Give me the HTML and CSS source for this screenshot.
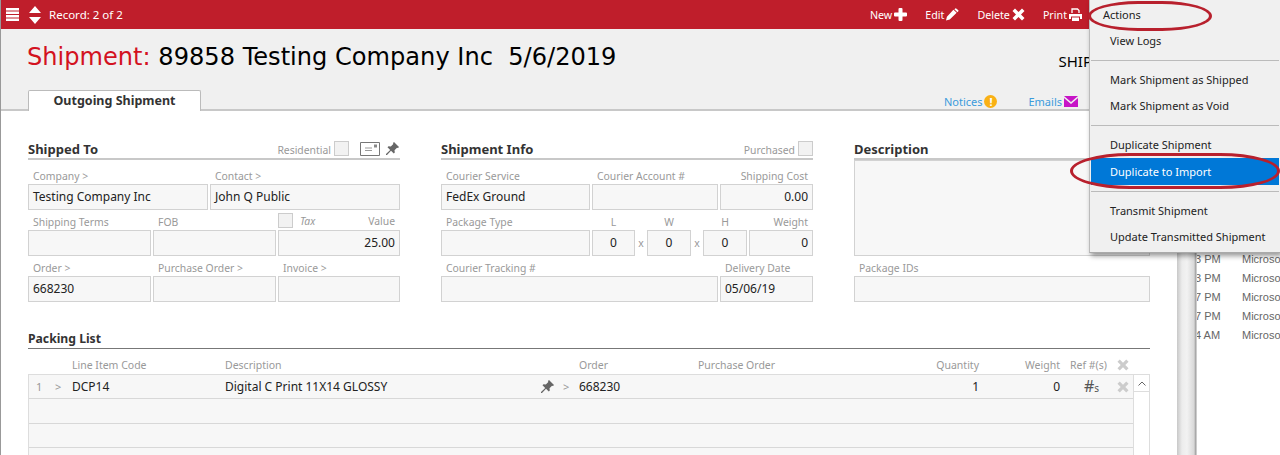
FILE: index.html
```html
<!DOCTYPE html>
<html lang="en">
<head>
    <meta charset="UTF-8">
    <title>Shipment 89858</title>
    <link rel="stylesheet" href="styles.css">
</head>
<body>
    <div class="window">
        <div class="toolbar">
            <svg class="bars" width="14" height="13" viewBox="0 0 14 13"><path d="M0 0h13v2.400H0zM0 3.500h13v2.400H0zM0 7h13v2.400H0zM0 10.500h13v2.400H0z" fill="#fff"/></svg>
            <svg class="updown" width="14" height="18" viewBox="0 0 14 18"><path d="M7 0l6 7H1zM7 18l6-7H1z" fill="#fff"/></svg>
            <span class="record">Record: 2 of 2</span>
            <div class="tool-actions">
                <span class="tool">New <svg width="13" height="13" viewBox="0 0 13 13"><path d="M4.500 1q0-1 1-1h2q1 0 1 1v3.500h3.500q1 0 1 1v2q0 1-1 1H8.500v3.500q0 1-1 1h-2q-1 0-1-1V8.500H1q-1 0-1-1v-2q0-1 1-1h3.500z" fill="#fff"/></svg></span>
                <span class="tool">Edit <svg width="13" height="13" viewBox="0 0 14 13"><path d="M0 13l1-4 7-7.500 3.500 3L4 12zM9 .8l1-.8q.6-.3 1 0l2.300 2q.4.500 0 1l-1 1z" fill="#fff"/></svg></span>
                <span class="tool">Delete <svg width="13" height="13" viewBox="0 0 13 13"><path d="M3 .5l3.500 3.500L10 .5l2.500 2.500L9 6.500l3.500 3.500L10 12.500 6.500 9 3 12.500.5 10 4 6.500.5 3z" fill="#fff"/></svg></span>
                <span class="tool">Print <svg width="13" height="13" viewBox="0 0 13 13"><path d="M3 5V1h5.500L10 2.500V5" fill="none" stroke="#fff" stroke-width="1.300"/><path d="M0 6h13v5h-2V8.500H2V11H0zM3 9.500h7V13H3z" fill="#fff"/></svg></span>
            </div>
        </div>

        <div class="page-head">
            <div class="title-row">
                <h1><span class="title-label">Shipment:</span> 89858 Testing Company Inc&nbsp; 5/6/2019</h1>
                <span class="status">SHIPPED</span>
            </div>
            <div class="tab-row">
                <div class="tab">Outgoing Shipment</div>
                <div class="tab-links">
                    <span class="tab-link">Notices <i class="notice-dot">!</i></span>
                    <span class="tab-link">Emails <svg width="14" height="11" viewBox="0 0 14 11"><path d="M0 0h14L7 6zM0 2l7 6 7-6v9H0z" fill="#c714c7"/></svg></span>
                </div>
            </div>
        </div>

        <div class="content">
            <div class="sections">
                <section class="sec-ship">
                    <div class="sec-head">
                        <h2>Shipped To</h2>
                        <span class="check-label">Residential</span><span class="check"></span>
                        <svg class="card-icon" width="20" height="14" viewBox="0 0 20 14"><path d="M.5.5h19v13H.5z" fill="#fff" stroke="#777"/><path d="M5 6h7M5 8.500h7" stroke="#999"/><path d="M14 2.500h3v3h-3z" fill="#888"/></svg>
                        <svg class="pin" width="13" height="13" viewBox="0 0 13 13"><path d="M8 0l5 5-1 1-1-.3-2.500 2.500.3 2.300-1 1L5 8.800 1 13l-1 0 0-1L4.200 8 1.500 5.300l1-1 2.300.3L7.300 2 7 1z" fill="#666"/></svg>
                    </div>
                    <div class="grid two">
                        <div class="field"><label>Company &gt;</label><div class="box">Testing Company Inc</div></div>
                        <div class="field"><label>Contact &gt;</label><div class="box">John Q Public</div></div>
                    </div>
                    <div class="grid three">
                        <div class="field"><label>Shipping Terms</label><div class="box"></div></div>
                        <div class="field"><label>FOB</label><div class="box"></div></div>
                        <div class="field"><label class="tax-label"><span class="check"></span><em>Tax</em><span class="push">Value</span></label><div class="box num">25.00</div></div>
                    </div>
                    <div class="grid three">
                        <div class="field"><label>Order &gt;</label><div class="box">668230</div></div>
                        <div class="field"><label>Purchase Order &gt;</label><div class="box"></div></div>
                        <div class="field"><label>Invoice &gt;</label><div class="box"></div></div>
                    </div>
                </section>

                <section class="sec-info">
                    <div class="sec-head">
                        <h2>Shipment Info</h2>
                        <span class="check-label">Purchased</span><span class="check"></span>
                    </div>
                    <div class="grid info-a">
                        <div class="field"><label>Courier Service</label><div class="box">FedEx Ground</div></div>
                        <div class="field"><label>Courier Account #</label><div class="box"></div></div>
                        <div class="field"><label class="num">Shipping Cost</label><div class="box num">0.00</div></div>
                    </div>
                    <div class="grid info-b">
                        <div class="field"><label>Package Type</label><div class="box"></div></div>
                        <div class="field"><label class="mid">L</label><div class="box mid">0</div></div>
                        <span class="times">x</span>
                        <div class="field"><label class="mid">W</label><div class="box mid">0</div></div>
                        <span class="times">x</span>
                        <div class="field"><label class="mid">H</label><div class="box mid">0</div></div>
                        <div class="field"><label class="num">Weight</label><div class="box num">0</div></div>
                    </div>
                    <div class="grid info-c">
                        <div class="field"><label>Courier Tracking #</label><div class="box"></div></div>
                        <div class="field"><label>Delivery Date</label><div class="box">05/06/19</div></div>
                    </div>
                </section>

                <section class="sec-desc">
                    <div class="sec-head"><h2>Description</h2></div>
                    <div class="box desc-box"></div>
                    <div class="field"><label>Package IDs</label><div class="box"></div></div>
                </section>
            </div>

            <section class="packing">
                <h2 class="pack-title">Packing List</h2>
                <div class="pack-row pack-labels">
                    <span></span><span></span>
                    <span>Line Item Code</span>
                    <span>Description</span>
                    <span></span><span></span>
                    <span>Order</span>
                    <span>Purchase Order</span>
                    <span class="num">Quantity</span>
                    <span class="num">Weight</span>
                    <span class="mid">Ref #(s)</span>
                    <svg class="x-mark" width="12" height="12" viewBox="0 0 13 13"><path d="M3 .5l3.500 3.500L10 .5l2.500 2.500L9 6.500l3.500 3.500L10 12.500 6.500 9 3 12.500.5 10 4 6.500.5 3z" fill="#ccc"/></svg>
                </div>
                <div class="pack-body">
                    <div class="pack-lines">
                        <div class="pack-row line">
                            <span class="dim line-no">1</span><span class="dim">&gt;</span>
                            <span>DCP14</span>
                            <span>Digital C Print 11X14 GLOSSY</span>
                            <svg class="pin" width="13" height="13" viewBox="0 0 13 13"><path d="M8 0l5 5-1 1-1-.3-2.500 2.500.3 2.300-1 1L5 8.800 1 13l-1 0 0-1L4.200 8 1.500 5.300l1-1 2.300.3L7.300 2 7 1z" fill="#666"/></svg>
                            <span class="dim">&gt;</span>
                            <span>668230</span>
                            <span></span>
                            <span class="num">1</span>
                            <span class="num">0</span>
                            <span class="mid ref">#<small>s</small></span>
                            <svg class="x-mark" width="12" height="12" viewBox="0 0 13 13"><path d="M3 .5l3.500 3.500L10 .5l2.500 2.500L9 6.500l3.500 3.500L10 12.500 6.500 9 3 12.500.5 10 4 6.500.5 3z" fill="#ccc"/></svg>
                        </div>
                        <div class="line"></div>
                        <div class="line"></div>
                        <div class="line"></div>
                    </div>
                    <div class="scroll"><span class="scroll-up"><svg width="8" height="5" viewBox="0 0 8 5"><path d="M.5 4.500L4 1l3.500 3.500" fill="none" stroke="#666"/></svg></span></div>
                </div>
            </section>
        </div>
    </div>

    <div class="behind">
        <div class="behind-rows">
            <div><span class="time">3 PM</span>Microso</div>
            <div><span class="time">3 PM</span>Microso</div>
            <div><span class="time">7 PM</span>Microso</div>
            <div><span class="time">7 PM</span>Microso</div>
            <div><span class="time">4 AM</span>Microso</div>
        </div>
    </div>

    <div class="menu">
        <div class="menu-title">Actions</div>
        <div class="menu-item">View Logs</div>
        <hr>
        <div class="menu-item">Mark Shipment as Shipped</div>
        <div class="menu-item">Mark Shipment as Void</div>
        <hr>
        <div class="menu-item">Duplicate Shipment</div>
        <div class="menu-item active">Duplicate to Import</div>
        <hr>
        <div class="menu-item">Transmit Shipment</div>
        <div class="menu-item">Update Transmitted Shipment</div>
    </div>
    <div class="ring ring-actions"></div>
    <div class="ring ring-import"></div>
</body>
</html>
```

FILE: styles.css
```css
html, body {
    margin: 0;
    height: 455px;
    overflow: hidden;
}
body {
    position: relative;
    display: flex;
    background: #fff;
    font-family: "Noto Sans", sans-serif;
    font-size: 11px;
    color: #222;
}
.window {
    width: 1177px;
    height: 455px;
    overflow: hidden;
    flex: none;
    border-left: 1px solid #999;
    box-sizing: border-box;
    background: #fff;
}
.toolbar {
    position: relative;
    z-index: 1;
    display: flex;
    align-items: center;
    height: 29px;
    padding-left: 5px;
    padding-right: 95px;
    background: #bf1e2b;
    color: #fff;
}
.updown {
    margin-left: 8px;
}
.record {
    margin-left: 7px;
    font-size: 11.5px;
}
.tool-actions {
    display: flex;
    gap: 18px;
    margin-left: auto;
    font-size: 10.7px;
}
.tool {
    display: flex;
    align-items: center;
    gap: 2px;
}
.page-head {
    height: 82px;
    box-sizing: border-box;
    border-bottom: 2px solid #c8c8c8;
    background: #f0f0f0;
    display: flex;
    flex-direction: column;
    justify-content: space-between;
}
.title-row {
    display: flex;
    padding-left: 26px;
    padding-top: 14px;
}
h1 {
    margin: 0;
    font-family: "DejaVu Sans", sans-serif;
    font-size: 24.1px;
    font-weight: normal;
    color: #000;
    white-space: pre;
}
.title-label {
    color: #d3121f;
}
.status {
    margin: 8px 0 0 442px;
    font-size: 15px;
    color: #000;
}
.tab-row {
    display: flex;
    justify-content: space-between;
    align-items: flex-end;
    padding-left: 27px;
    margin-bottom: -2px;
}
.tab {
    width: 173px;
    height: 21px;
    box-sizing: border-box;
    background: #fff;
    border: 1px solid #bbb;
    border-bottom: none;
    border-radius: 2px 2px 0 0;
    text-align: center;
    font-weight: bold;
    font-size: 12.5px;
    line-height: 20px;
    color: #333;
}
.tab-links {
    display: flex;
    gap: 31px;
    margin-right: 99px;
    margin-bottom: 2px;
    color: #3b9bdc;
}
.tab-link {
    display: flex;
    align-items: center;
    gap: 2px;
}
.notice-dot {
    display: inline-block;
    width: 13px;
    height: 13px;
    border-radius: 50%;
    background: #f9b115;
    color: #fff;
    font-size: 11px;
    font-style: normal;
    font-weight: bold;
    line-height: 13px;
    text-align: center;
}
.content {
    padding: 29px 0 0 27px;
}
.sections {
    display: flex;
    height: 191px;
}
.sec-ship {
    width: 372px;
}
.sec-info {
    width: 372px;
    margin-left: 41px;
}
.sec-desc {
    width: 296px;
    margin-left: 41px;
}
.sec-head {
    display: flex;
    align-items: center;
    height: 17px;
    border-bottom: 2px solid #c8c8c8;
    padding-bottom: 1px;
}
h2 {
    margin: 0;
    font-size: 13px;
    font-weight: bold;
    color: #333;
}
.sec-head h2 {
    margin-right: auto;
}
.check-label {
    padding-top: 2px;
    font-size: 10.4px;
    color: #999;
    margin-right: 3px;
}
.check {
    display: inline-block;
    width: 13px;
    height: 13px;
    background: #f2f2f2;
    border: 1px solid #ccc;
}
.card-icon {
    margin-left: 11px;
}
.sec-ship .sec-head .pin {
    margin: 0 1px 0 6px;
}
.grid {
    display: grid;
    gap: 2px;
    height: 46px;
}
.sec-head + .grid {
    margin-top: 5px;
}
.two {
    grid-template-columns: 180px 190px;
}
.three {
    grid-template-columns: 123px 123px 122px;
}
.info-a {
    grid-template-columns: 149px 126px 93px;
}
.info-b {
    grid-template-columns: 149px 43px 8px 44px 8px 44px 64px;
}
.info-c {
    grid-template-columns: 277px 93px;
}
.field label {
    display: block;
    height: 19px;
    padding: 0 5px;
    line-height: 22px;
    font-size: 10.4px;
    color: #999;
    white-space: nowrap;
}
.box {
    height: 26px;
    box-sizing: border-box;
    padding: 0 4px;
    background: #f7f7f7;
    border: 1px solid #d2d2d2;
    line-height: 24px;
    font-size: 12px;
    white-space: nowrap;
}
.num {
    text-align: right;
}
.mid {
    text-align: center;
}
.times {
    align-self: end;
    margin-bottom: 1px;
    line-height: 26px;
    font-size: 10.4px;
    text-align: center;
    color: #999;
}
.tax-label {
    display: flex !important;
    align-items: center;
    gap: 7px;
}
.tax-label .check {
    margin-left: -5px;
}
.tax-label em {
    color: #999;
}
.push {
    margin-left: auto;
}
.desc-box {
    height: 96px;
    margin-bottom: 1px;
}
.packing {
    width: 1122px;
}
.pack-title {
    height: 17px;
    line-height: 16px;
    border-bottom: 1px solid #777;
    font-size: 12.2px;
}
.pack-row {
    display: grid;
    grid-template-columns: 26px 17px 153px 316px 22px 16px 119px 100px 181px 81px 57px 16px;
    align-items: center;
}
.pack-labels {
    height: 25px;
    box-sizing: border-box;
    padding: 6px 0 0 1px;
    font-size: 10.5px;
    color: #999;
}
.pack-body {
    display: flex;
    border-left: 1px solid #ddd;
    border-right: 1px solid #ddd;
    border-top: 1px solid #ddd;
}
.pack-lines {
    flex: 1;
}
.line {
    height: 24.4px;
    box-sizing: border-box;
    background: #f7f7f7;
    border-bottom: 1px solid #d8d8d8;
    font-size: 12px;
}
.dim {
    font-size: 11px;
    color: #999;
}
.line-no {
    padding-left: 7px;
}
.ref {
    padding-left: 6px;
    font-size: 16px;
    line-height: 18px;
    color: #555;
}
.ref small {
    font-size: 10px;
}
.scroll {
    width: 16px;
    border-left: 1px solid #ddd;
    background: #fff;
}
.scroll-up {
    display: flex;
    align-items: center;
    justify-content: center;
    height: 16px;
    border-bottom: 1px solid #ddd;
}
.behind {
    flex: 1;
    box-sizing: border-box;
    padding: 250px 0 0 20px;
    background: linear-gradient(to right, #c8c8c8, #ececec 5px, #f2f2f2 10px, #d8d8d8 17px, #999 19px, #fff 20px);
    font-family: "Liberation Sans", sans-serif;
    font-size: 11px;
    line-height: 19px;
    color: #666;
    white-space: nowrap;
}
.behind-rows {
    overflow: hidden;
}
.time {
    display: inline-block;
    width: 47px;
    margin-left: -2px;
}
.menu {
    position: absolute;
    left: 1089px;
    top: 0;
    width: 191px;
    height: 253px;
    z-index: 2;
    box-sizing: border-box;
    border-left: 1px solid #bbb;
    border-bottom: 1px solid #aaa;
    background: #f0f0f0;
    box-shadow: 2px 3px 5px rgba(0, 0, 0, 0.4);
    color: #222;
}
.menu-title {
    height: 28px;
    padding-left: 13px;
    line-height: 30px;
}
.menu-item {
    height: 26px;
    margin: 0 1px;
    padding-left: 19px;
    line-height: 26px;
    white-space: nowrap;
}
.menu hr {
    margin: 6px 1px;
    border: none;
    border-top: 1px solid #bbb;
}
.menu-item.active {
    height: 27px;
    line-height: 28px;
    background: #0078d7;
    color: #fff;
}
.ring {
    position: absolute;
    z-index: 3;
    border: 3px solid #b8202d;
    box-sizing: border-box;
}
.ring-actions {
    left: 1088px;
    top: 1px;
    width: 124px;
    height: 30px;
    border-radius: 50px / 15px;
}
.ring-import {
    left: 1070px;
    top: 153px;
    width: 210px;
    height: 36px;
    border-radius: 60px / 18px;
}
```
